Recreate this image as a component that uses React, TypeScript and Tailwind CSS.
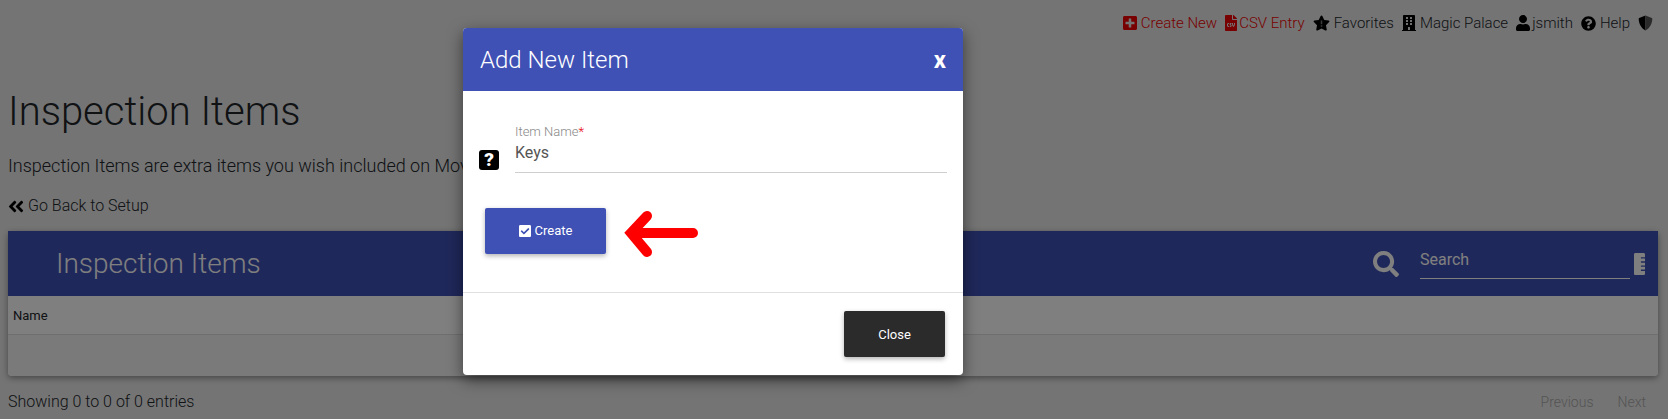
import { FaPlusSquare, FaFileCsv, FaBuilding, FaUser, FaQuestionCircle, FaAngleDoubleLeft, FaCheckSquare, FaSearch, FaRulerVertical } from "react-icons/fa";

function NavItem({ icon, label, red, tight }: { icon: React.ReactNode; label: string; red?: boolean; tight?: boolean }) {
  return (
    <span className={`flex items-center ${tight ? "gap-[2px]" : "gap-[4px]"} ${red ? "text-[#f00000]" : "text-[#212529]"}`}>
      <span className={red ? "text-[#f00000]" : "text-black"}>{icon}</span>
      {label}
    </span>
  );
}

function StarIcon() {
  return (
    <svg width="17" height="16" viewBox="0 0 576 512" className="block">
      <path fill="#000" d="M259.3 17.8L194 150.2 47.9 171.5c-26.2 3.8-36.7 36.1-17.7 54.6l105.7 103-25 145.5c-4.5 26.3 23.2 46 46.4 33.7L288 439.6l130.7 68.7c23.2 12.2 50.9-7.4 46.4-33.7l-25-145.5 105.7-103c19-18.5 8.5-50.8-17.7-54.6L382 150.2 316.7 17.8c-11.7-23.6-45.6-23.9-57.4 0z" />
      <path fill="#777" d="M262 170h52v130h-52zM262 330h52v50h-52z" />
    </svg>
  );
}

function ShieldIcon() {
  return (
    <svg width="15" height="16" viewBox="0 0 512 512" className="block">
      <path fill="#000" d="M256 0 L40 88 C30 92 24 101 24 112 C24 270 110 440 256 512 Z" />
      <path fill="#555" d="M256 0 L472 88 C482 92 488 101 488 112 C488 270 402 440 256 512 Z" />
    </svg>
  );
}

export default function App() {
  return (
    <div className="relative h-[419px] w-[1668px] overflow-hidden bg-[#e8e8e8] font-['Roboto',sans-serif] text-[#212529]">
      <nav className="flex h-[46px] items-center justify-end gap-[8px] pr-[15px] text-[15px] font-light">
        <NavItem red icon={<FaPlusSquare className="block h-[16px] w-[14px]" />} label="Create New" />
        <NavItem red tight icon={<FaFileCsv className="block h-[16px] w-[12px]" />} label="CSV Entry" />
        <NavItem icon={<StarIcon />} label="Favorites" />
        <NavItem icon={<FaBuilding className="block h-[16px] w-[14px]" />} label="Magic Palace" />
        <NavItem tight icon={<FaUser className="block h-[16px] w-[14px]" />} label="jsmith" />
        <NavItem icon={<FaQuestionCircle className="block h-[15px] w-[15px]" />} label="Help" />
        <NavItem icon={<ShieldIcon />} label="" />
      </nav>
      <main className="pt-[42px] pr-[10px] pl-2">
        <h1 className="text-[40px] leading-[48px] font-light">Inspection Items</h1>
        <p className="mt-[16px] text-[18px] leading-[27px] font-light">
          Inspection Items are extra items you wish included on Move In/Out inspections.
        </p>
        <a className="mt-[15px] flex items-center gap-[4px] text-[16px] leading-6 font-light">
          <FaAngleDoubleLeft className="h-[19px] w-[16px] text-black" />
          Go Back to Setup
        </a>
        <section className="mt-[13px] rounded-[4px] bg-white shadow-[0_2px_6px_rgba(0,0,0,0.4)]">
          <header className="flex h-[65px] items-center bg-[#3f51b5] pr-[13px] pl-[48px] text-white">
            <h2 className="flex-1 text-[28px] font-light">Inspection Items</h2>
            <FaSearch className="mr-[21px] text-[26px]" />
            <div className="mr-[4px] mb-[1px] flex h-[32px] w-[210px] items-center border-b border-white pb-[5px] text-[16px]">Search</div>
            <FaRulerVertical className="h-[22px] w-[11px]" />
          </header>
          <div className="flex h-[39px] items-center border-b border-[#dedede] px-[5px] pt-[1px] text-[13px] font-normal">Name</div>
          <div className="h-[41px] rounded-b-[4px] bg-[#f5f5f5]" />
        </section>
        <footer className="mt-[14px] flex items-center justify-between text-[16px] font-light">
          <span>Showing 0 to 0 of 0 entries</span>
          <span className="flex gap-[24px] pr-[12px] text-[14px] text-[#aaa]">
            <span>Previous</span>
            <span>Next</span>
          </span>
        </footer>
      </main>

      <div className="absolute inset-0 bg-black/50 pt-[28px] pl-[463px]">
        <div className="w-[500px] overflow-hidden rounded-[4px] bg-white shadow-[0_5px_15px_rgba(0,0,0,0.5)]">
          <div className="flex h-[63px] items-center justify-between bg-[#3f51b5] px-[17px] text-white">
            <h3 className="text-[24px] font-light">Add New Item</h3>
            <span className="text-[24px] font-bold">x</span>
          </div>
          <div className="h-[202px] border-b border-[#e0e0e0]">
            <div className="flex items-end px-[16px] pt-[34px]">
              <div className="mr-[16px] mb-[3px] flex h-[20px] w-[20px] items-center justify-center rounded-[3px] bg-black text-[19px] font-black text-white">?</div>
              <div className="flex-1 border-b border-[#cfcfcf]">
                <div className="text-[13px] leading-[14px] font-light text-[#888]">Item Name<span className="text-red-600">*</span></div>
                <div className="h-[33px] pt-[2px] text-[16px] leading-[24px] text-[#555]">Keys</div>
              </div>
            </div>
            <div className="mt-[35px] flex items-start pl-[22px]">
              <button className="flex h-[46px] w-[121px] items-center justify-center gap-[4px] rounded-[2px] bg-[#3f51b5] text-[13px] text-white shadow-[0_2px_5px_rgba(0,0,0,0.3)]">
                <FaCheckSquare className="h-[14px] w-[12px]" />
                Create
              </button>
              <svg width="74" height="46" viewBox="0 0 74 46" className="mt-[3px] ml-[18px]" fill="none" stroke="#ff0000" strokeWidth="10" strokeLinecap="round" strokeLinejoin="miter">
                <path d="M 69 22 H 7 M 23 5 L 7 22 L 23 41" />
              </svg>
            </div>
          </div>
          <div className="flex h-[82px] items-start justify-end pt-[18px] pr-[18px]">
            <button className="h-[46px] w-[101px] rounded-[2px] bg-[#2b2b2b] pt-[1px] text-[13px] text-white shadow-[0_2px_5px_rgba(0,0,0,0.3)]">Close</button>
          </div>
        </div>
      </div>
    </div>
  );
}
